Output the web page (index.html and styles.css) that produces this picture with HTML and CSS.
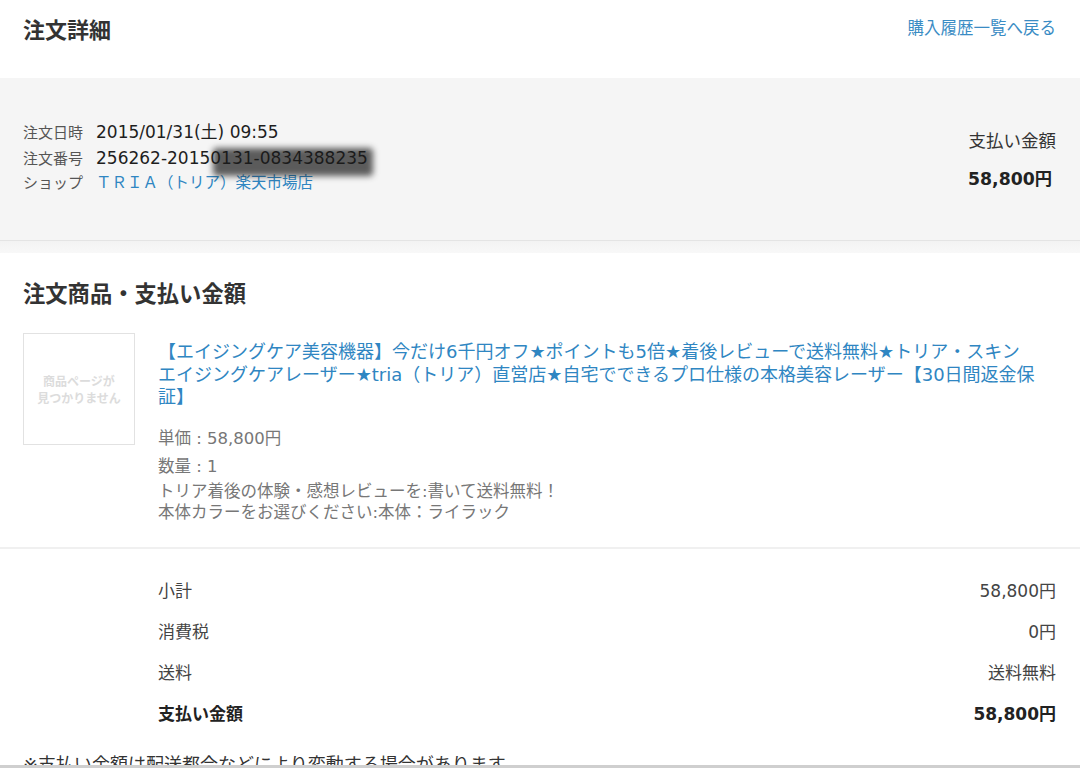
FILE: index.html
```html
<!DOCTYPE html>
<html lang="ja">
<head>
<meta charset="utf-8">
<title>注文詳細</title>
<link rel="stylesheet" href="styles.css">
</head>
<body>
<header class="page-head">
  <h1 class="page-title">注文詳細</h1>
  <a class="back-link" href="#">購入履歴一覧へ戻る</a>
</header>

<section class="summary-band">
  <div class="order-info">
    <div class="info-row"><span class="info-label">注文日時</span><span class="info-value">2015/01/31(土) 09:55</span></div>
    <div class="info-row"><span class="info-label">注文番号</span><span class="info-value">256262-20150131-0834388235</span></div>
    <div class="info-row"><span class="info-label">ショップ</span><a class="info-shop" href="#">ＴＲＩＡ（トリア）楽天市場店</a></div>
    <div class="redact"></div>
  </div>
  <div class="pay-total">
    <div class="pay-label">支払い金額</div>
    <div class="pay-amount">58,800円</div>
  </div>
</section>
<div class="band-edge"></div>

<section class="items">
  <h2 class="section-title">注文商品・支払い金額</h2>
  <div class="item">
    <div class="thumb"><span>商品ページが<br>見つかりません</span></div>
    <div class="item-body">
      <a class="item-name" href="#">【エイジングケア美容機器】今だけ6千円オフ★ポイントも5倍★着後レビューで送料無料★トリア・スキン<br>エイジングケアレーザー★tria（トリア）直営店★自宅でできるプロ仕様の本格美容レーザー【30日間返金保証】</a>
      <div class="item-meta">単価 : 58,800円</div>
      <div class="item-meta">数量 : 1</div>
      <div class="item-opts">トリア着後の体験・感想レビューを:書いて送料無料！<br>本体カラーをお選びください:本体：ライラック</div>
    </div>
  </div>
</section>

<section class="totals">
  <div class="total-row"><span>小計</span><span>58,800円</span></div>
  <div class="total-row"><span>消費税</span><span>0円</span></div>
  <div class="total-row"><span>送料</span><span>送料無料</span></div>
  <div class="total-row grand"><span>支払い金額</span><span>58,800円</span></div>
</section>
<p class="note">※支払い金額は配送都合などにより変動する場合があります。</p>
<div class="bottom-edge"></div>
</body>
</html>
```

FILE: styles.css
```css
* { box-sizing: border-box; }
html, body { margin: 0; padding: 0; }
body {
  width: 1080px;
  height: 768px;
  overflow: hidden;
  background: #fff;
  color: #333;
  font-family: "DejaVu Sans", "Noto Sans CJK JP", sans-serif;
}
a { text-decoration: none; }

.page-head {
  height: 78px;
  display: flex;
  justify-content: space-between;
  align-items: flex-start;
  padding: 14px 24px 0 23px;
}
.page-title {
  margin: 0;
  font-family: "Noto Sans CJK JP", sans-serif;
  font-size: 22px;
  line-height: 28px;
  font-weight: bold;
  color: #333;
}
.back-link {
  font-size: 16.5px;
  line-height: 30px;
  color: #3a8cc4;
}

.summary-band {
  height: 163px;
  background: #f5f5f5;
  border-bottom: 1px solid #e4e4e4;
  display: flex;
  justify-content: space-between;
  padding: 40px 24px 0 23px;
}
.band-edge {
  height: 12px;
  background: linear-gradient(#f3f3f3, #f8f8f8);
}
.order-info {
  position: relative;
  padding-top: 2px;
}
.info-row {
  display: flex;
  align-items: baseline;
  height: 25.5px;
  line-height: 25.5px;
}
.info-label {
  width: 73px;
  font-size: 15px;
  color: #555;
}
.info-value {
  font-size: 17px;
  color: #1e1e1e;
}
.info-shop {
  font-size: 15.5px;
  color: #2f86c2;
}
.redact {
  position: absolute;
  left: 190px;
  top: 30px;
  width: 160px;
  height: 28px;
  background: rgba(25, 25, 25, 0.7);
  filter: blur(3px);
  border-radius: 4px;
}
.pay-total {
  text-align: right;
  padding-top: 10px;
}
.pay-label {
  font-size: 17.5px;
  line-height: 26px;
  color: #333;
}
.pay-amount {
  font-size: 17.3px;
  line-height: 26px;
  margin-top: 12px;
  font-weight: bold;
  color: #222;
  padding-right: 4px;
}

.items {
  padding: 24px 24px 0 23px;
  border-bottom: 2px solid #f0f0f0;
  height: 296px;
}
.section-title {
  margin: 0;
  font-family: "Noto Sans CJK JP", sans-serif;
  font-size: 22.3px;
  line-height: 30px;
  font-weight: bold;
  color: #333;
}
.item {
  display: flex;
  gap: 23px;
  margin-top: 26px;
}
.thumb {
  flex: 0 0 112px;
  height: 112px;
  border: 1px solid #e2e2e2;
  display: flex;
  align-items: center;
  justify-content: center;
  text-align: center;
}
.thumb span {
  font-family: "Noto Sans CJK JP", sans-serif;
  font-size: 12px;
  line-height: 17px;
  font-weight: bold;
  color: #dcdcdc;
}
.item-body {
  flex: 1;
  padding-top: 8px;
}
.item-name {
  display: block;
  font-size: 18px;
  line-height: 22.5px;
  color: #2f86c2;
}
.item-meta {
  font-size: 16.5px;
  line-height: 28px;
  color: #777;
}
.item-name + .item-meta { margin-top: 16px; }
.item-opts {
  font-size: 16.5px;
  line-height: 21px;
  color: #777;
}

.totals {
  padding: 22px 24px 0 158px;
}
.total-row {
  display: flex;
  justify-content: space-between;
  font-size: 17px;
  line-height: 41px;
  color: #444;
}
.total-row.grand {
  font-weight: bold;
  color: #222;
}
.note {
  margin: 17px 0 0 23px;
  font-size: 18px;
  line-height: 26px;
  color: #333;
}
.bottom-edge {
  position: fixed;
  left: 0;
  right: 0;
  bottom: 0;
  height: 3px;
  background: #cfcfcf;
}
```
